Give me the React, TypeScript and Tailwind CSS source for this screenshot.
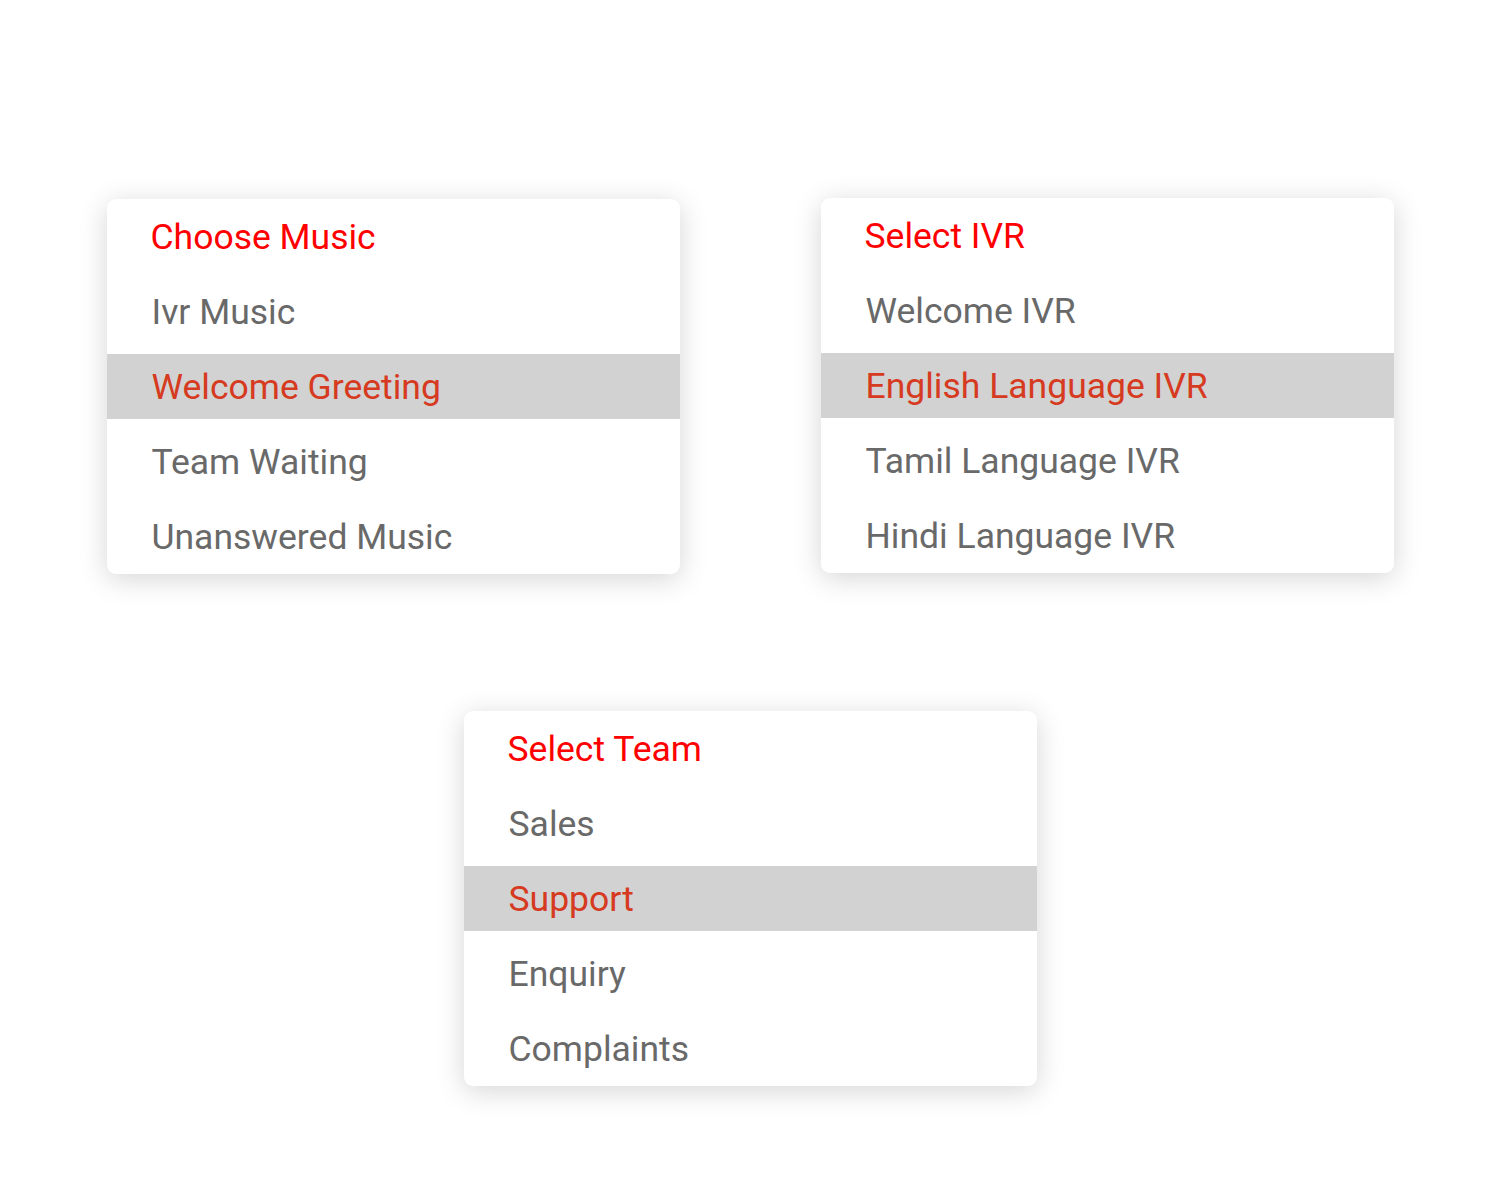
import React from "react";

type CardProps = { title: string; items: string[]; active: number };

function Card({ title, items, active }: CardProps) {
  return (
    <div className="w-[573px] h-[375px] bg-white rounded-[9px] shadow-[0_5px_28px_rgba(0,0,0,0.17)] py-[5px] flex flex-col gap-[10px] overflow-hidden">
      <div className="h-[65px] flex items-center pl-[44px] pt-[3px] text-[35.5px] text-[#ff0000]">{title}</div>
      {items.map((it, i) => (
        <div
          key={it}
          className={
            i === active
              ? "h-[65px] flex items-center pl-[45px] pt-[3px] text-[35.5px] bg-[#d2d2d2] text-[#d63a20]"
              : "h-[65px] flex items-center pl-[45px] pt-[3px] text-[35.5px] text-[#696969]"
          }
        >
          {it}
        </div>
      ))}
    </div>
  );
}

export default function App() {
  return (
    <div
      className="w-[1500px] h-[1200px] bg-white flex flex-col items-center pt-[199px] gap-[137px]"
      style={{ fontFamily: "Roboto, 'Noto Sans', sans-serif" }}
    >
      <div className="flex gap-[141px] items-start">
        <Card title="Choose Music" items={["Ivr Music", "Welcome Greeting", "Team Waiting", "Unanswered Music"]} active={1} />
        <div className="-mt-[1px]">
          <Card title="Select IVR" items={["Welcome IVR", "English Language IVR", "Tamil Language IVR", "Hindi Language IVR"]} active={1} />
        </div>
      </div>
      <Card title="Select Team" items={["Sales", "Support", "Enquiry", "Complaints"]} active={1} />
    </div>
  );
}
